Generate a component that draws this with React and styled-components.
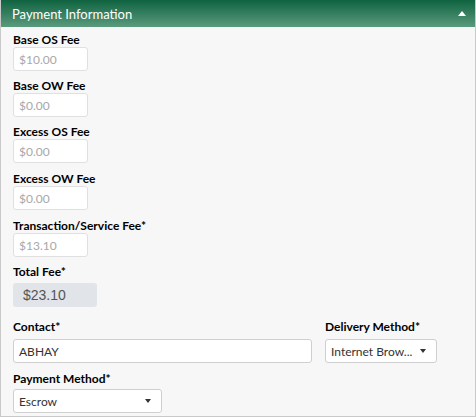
import styled, { createGlobalStyle } from "styled-components";

const GlobalStyle = createGlobalStyle`
  body {
    margin: 0;
    background: #ffffff;
    font-family: Lato, "Noto Sans", sans-serif;
  }
  * { box-sizing: border-box; }
`;

const Panel = styled.section`
  width: 476px;
  height: 417px;
  border: 1px solid #c9c9c9;
  border-top: none;
  background: #f7f7f7;
  display: flex;
  flex-direction: column;
  overflow: hidden;
`;

const Header = styled.div`
  flex-shrink: 0;
  height: 27px;
  margin: 0 -1px;
  padding: 0 10px 0 12px;
  display: flex;
  align-items: center;
  justify-content: space-between;
  background: linear-gradient(#0f6340, #5a9a7d);
  color: #ffffff;
  font-size: 13px;
`;

const Caret = styled.span`
  width: 0;
  height: 0;
  border-left: 4px solid transparent;
  border-right: 4px solid transparent;
  border-bottom: 5px solid #ffffff;
`;

const Body = styled.div`
  padding: 6px 12px 0 12px;
  display: flex;
  flex-direction: column;
`;

const Field = styled.div`
  display: flex;
  flex-direction: column;
  margin-bottom: ${(p) => p.$mb ?? 8}px;
`;

const Label = styled.label`
  font-weight: 700;
  font-size: 12px;
  line-height: 14px;
  color: #000000;
  margin-bottom: ${(p) => p.$gap ?? 0}px;
`;

const Input = styled.div`
  width: ${(p) => p.$w}px;
  height: 24px;
  border: 1px solid ${(p) => (p.$dark ? "#cfcfcf" : "#e0e0e0")};
  border-radius: 3px;
  background: #ffffff;
  padding: 0 5px;
  display: flex;
  align-items: center;
  justify-content: space-between;
  font-size: 12px;
  color: ${(p) => (p.$dark ? "#333333" : "#a8a8a8")};
`;

const TotalBox = styled.div`
  width: 84px;
  height: 24px;
  border-radius: 3px;
  background: #e1e4e8;
  padding-left: 10px;
  display: flex;
  align-items: center;
  font-family: "Liberation Sans", Arial, sans-serif;
  font-size: 14px;
  color: #555555;
`;

const Row = styled.div`
  display: flex;
  gap: 13px;
`;

const Arrow = styled.span`
  width: 0;
  height: 0;
  margin-right: 5px;
  border-left: 3px solid transparent;
  border-right: 3px solid transparent;
  border-top: 4px solid #333333;
`;

const fees = [
  ["Base OS Fee", "$10.00", 8],
  ["Base OW Fee", "$0.00", 8],
  ["Excess OS Fee", "$0.00", 9],
  ["Excess OW Fee", "$0.00", 9],
  ["Transaction/Service Fee*", "$13.10", 8],
];

export default function App() {
  return (
    <>
      <GlobalStyle />
      <Panel>
        <Header>
          <span>Payment Information</span>
          <Caret />
        </Header>
        <Body>
          {fees.map(([label, value, mb]) => (
            <Field key={label} $mb={mb}>
              <Label>{label}</Label>
              <Input $w={75}>{value}</Input>
            </Field>
          ))}
          <Field $mb={13}>
            <Label $gap={4}>Total Fee*</Label>
            <TotalBox>$23.10</TotalBox>
          </Field>
          <Row>
            <Field $mb={9}>
              <Label $gap={5}>Contact*</Label>
              <Input $w={299} $dark>ABHAY</Input>
            </Field>
            <Field $mb={9}>
              <Label $gap={5}>Delivery Method*</Label>
              <Input $w={112} $dark>
                Internet Brow...
                <Arrow />
              </Input>
            </Field>
          </Row>
          <Field $mb={0}>
            <Label $gap={3}>Payment Method*</Label>
            <Input $w={149} $dark>
              Escrow
              <Arrow />
            </Input>
          </Field>
        </Body>
      </Panel>
    </>
  );
}
